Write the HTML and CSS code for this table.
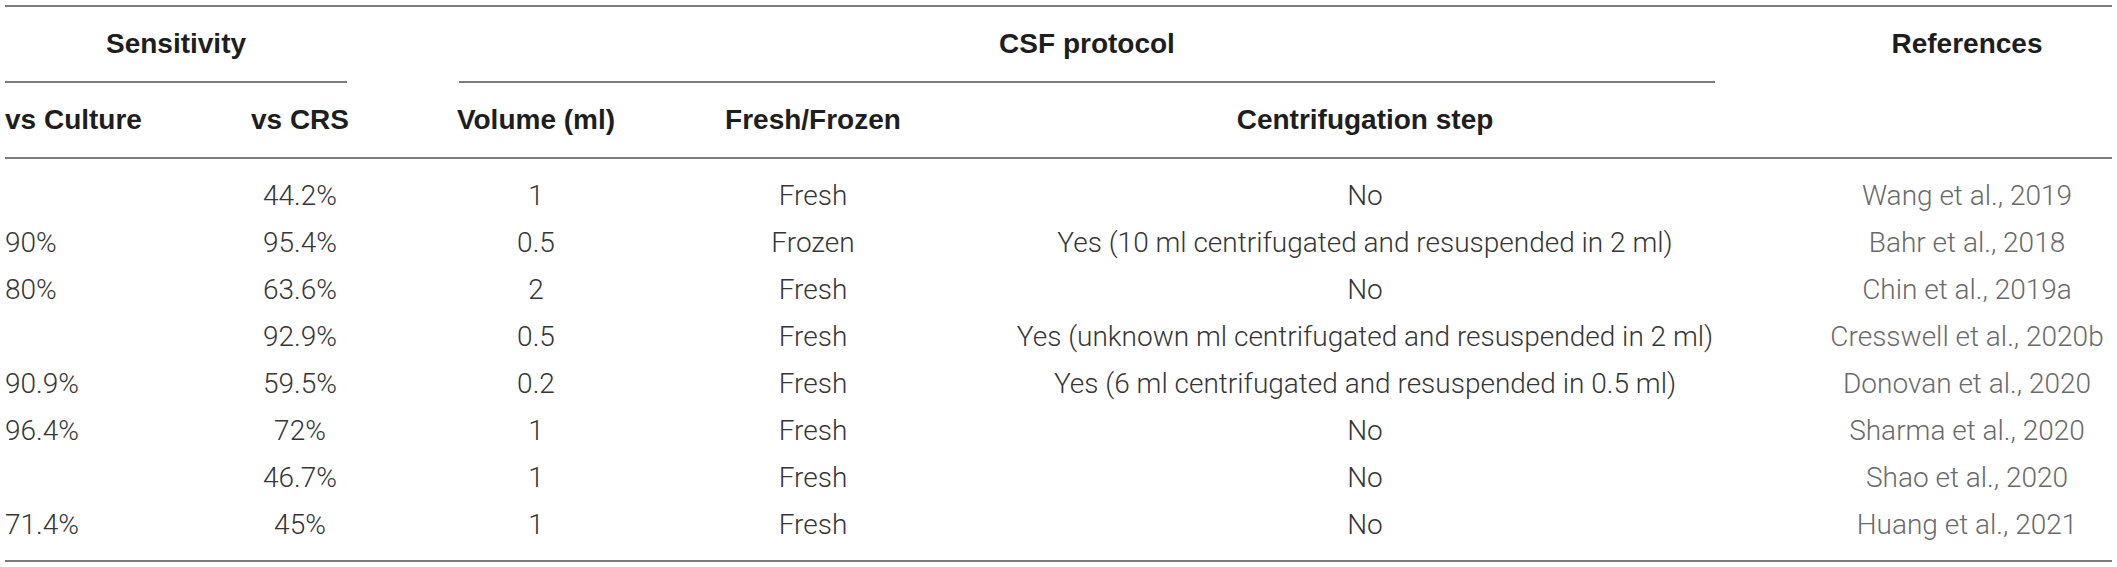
FILE: index.html
```html
<!DOCTYPE html>
<html>
<head>
<meta charset="utf-8">
<link rel="stylesheet" href="styles.css">
</head>
<body>
<div class="tbl">
  <div class="head">
    <div class="h1 sens">Sensitivity</div>
    <div class="h1 csf">CSF protocol</div>
    <div class="h1 ref">References</div>
    <div class="h2 left">vs Culture</div>
    <div class="h2">vs CRS</div>
    <div class="h2">Volume (ml)</div>
    <div class="h2">Fresh/Frozen</div>
    <div class="h2">Centrifugation step</div>
    <div class="h2"></div>
  </div>
  <div class="body">
    <div class="c left"></div><div class="c">44.2%</div><div class="c">1</div><div class="c">Fresh</div><div class="c">No</div><div class="c r">Wang et al., 2019</div>
    <div class="c left">90%</div><div class="c">95.4%</div><div class="c">0.5</div><div class="c">Frozen</div><div class="c">Yes (10 ml centrifugated and resuspended in 2 ml)</div><div class="c r">Bahr et al., 2018</div>
    <div class="c left">80%</div><div class="c">63.6%</div><div class="c">2</div><div class="c">Fresh</div><div class="c">No</div><div class="c r">Chin et al., 2019a</div>
    <div class="c left"></div><div class="c">92.9%</div><div class="c">0.5</div><div class="c">Fresh</div><div class="c">Yes (unknown ml centrifugated and resuspended in 2 ml)</div><div class="c r">Cresswell et al., 2020b</div>
    <div class="c left">90.9%</div><div class="c">59.5%</div><div class="c">0.2</div><div class="c">Fresh</div><div class="c">Yes (6 ml centrifugated and resuspended in 0.5 ml)</div><div class="c r">Donovan et al., 2020</div>
    <div class="c left">96.4%</div><div class="c">72%</div><div class="c">1</div><div class="c">Fresh</div><div class="c">No</div><div class="c r">Sharma et al., 2020</div>
    <div class="c left"></div><div class="c">46.7%</div><div class="c">1</div><div class="c">Fresh</div><div class="c">No</div><div class="c r">Shao et al., 2020</div>
    <div class="c left">71.4%</div><div class="c">45%</div><div class="c">1</div><div class="c">Fresh</div><div class="c">No</div><div class="c r">Huang et al., 2021</div>
  </div>
</div>
</body>
</html>
```
FILE: styles.css
```css
html, body {
  margin: 0;
  padding: 0;
  background: #ffffff;
}
.tbl {
  margin: 5px 5px 0 5px;
  width: 2107px;
  display: flex;
  flex-direction: column;
  border-top: 2px solid #7c7c7c;
  border-bottom: 2px solid #7c7c7c;
}
.head, .body {
  display: grid;
  grid-template-columns: 241px 108px 364px 190px 914px 290px;
}
.head {
  font-family: "Liberation Sans", Arial, sans-serif;
  font-weight: bold;
  font-size: 28px;
  color: #1e1e1e;
}
.h1 {
  height: 74px;
  display: flex;
  align-items: center;
  justify-content: center;
}
.sens {
  grid-column: 1 / 3;
  margin-right: 7px;
  border-bottom: 2px solid #7c7c7c;
}
.csf {
  grid-column: 3 / 6;
  margin: 0 107px 0 105px;
  border-bottom: 2px solid #7c7c7c;
}
.ref {
  grid-column: 6;
  grid-row: 1 / 2;
}
.h2 {
  height: 74px;
  display: flex;
  align-items: center;
  justify-content: center;
  white-space: nowrap;
  border-bottom: 2px solid #7c7c7c;
}
.h2.left {
  justify-content: flex-start;
}
.body {
  padding: 13px 0 12px 0;
  grid-auto-rows: 47px;
  font-family: "Roboto", "Liberation Sans", Arial, sans-serif;
  font-weight: 300;
  font-size: 28px;
  color: #363636;
}
.c {
  display: flex;
  align-items: center;
  justify-content: center;
  white-space: nowrap;
}
.c.left {
  justify-content: flex-start;
}
.c.r {
  color: #6a6a6a;
}
```
